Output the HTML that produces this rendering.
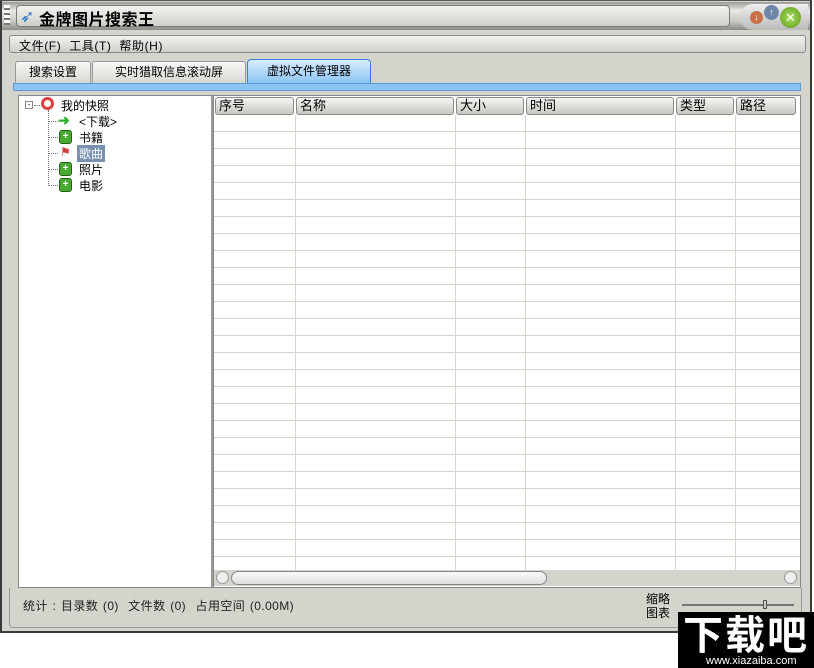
<!DOCTYPE html>
<html><head><meta charset="utf-8"><style>
*{margin:0;padding:0;box-sizing:border-box}
body{width:814px;height:668px;background:#fff;position:relative;overflow:hidden;font-family:"Liberation Sans","Noto Sans CJK SC","WenQuanYi Zen Hei",sans-serif;font-size:12px;color:#000}
.a{position:absolute}
.win{left:0;top:0;width:812px;height:633px;background:#d4d3cc;border:2px solid #3a3a3a;border-top:1px solid #555}
.hdr{top:97px;height:18px;background:linear-gradient(#f4f4f2,#c8c8c2);border:1px solid #8a8a86;border-radius:3px;padding-left:3px;line-height:15px;font-size:13px}
</style></head><body>
<div class="a win"></div>
<div class="a" style="left:2px;top:2px;width:808px;height:28px;background:linear-gradient(#9a9a96,#e8e8e4 30%,#c8c8c2 70%,#8a8a86)"></div>
<div class="a" style="left:16px;top:5px;width:714px;height:22px;background:linear-gradient(#f2f2f0,#cfcfca);border:1px solid #7a7a76;border-radius:4px"></div>
<div class="a" style="left:4px;top:5px;width:6px;height:20px;background:repeating-linear-gradient(#fff 0 3px,#777 3px 5px)"></div>
<div class="a" style="left:20px;top:7px;font-size:17px;color:#2a70c8">➶</div>
<div class="a" style="left:39px;top:6px;font-size:16px;font-weight:bold;letter-spacing:0.5px">金牌图片搜索王</div>
<div class="a" style="left:740px;top:4px;width:68px;height:26px;border-radius:14px 0 0 14px;background:linear-gradient(#eee,#bbb)"></div>
<div class="a" style="left:750px;top:11px;width:13px;height:13px;border-radius:50%;background:#c8704a;color:#fff;font-size:9px;text-align:center;line-height:13px">↓</div>
<div class="a" style="left:764px;top:5px;width:15px;height:15px;border-radius:50%;background:#6e86a8;color:#fff;font-size:9px;text-align:center;line-height:15px">↑</div>
<div class="a" style="left:780px;top:7px;width:21px;height:21px;border-radius:50%;background:radial-gradient(#a8e060,#5c9a18);color:#fff;font-size:13px;text-align:center;line-height:21px">✕</div>
<div class="a" style="left:9px;top:35px;width:797px;height:18px;background:linear-gradient(#f2f2f0,#cfcfca);border:1px solid #8a8a86;border-radius:3px"></div>
<div class="a" style="left:19px;top:37px;font-size:12px;letter-spacing:0.6px">文件(F)&nbsp;&nbsp;工具(T)&nbsp;&nbsp;帮助(H)</div>
<div class="a" style="left:15px;top:61px;width:76px;height:22px;background:linear-gradient(#f8f8f6,#d8d8d2);border:1px solid #999;border-bottom:none;border-radius:3px 3px 0 0;text-align:center;line-height:20px">搜索设置</div>
<div class="a" style="left:92px;top:61px;width:154px;height:22px;background:linear-gradient(#f8f8f6,#d8d8d2);border:1px solid #999;border-bottom:none;border-radius:3px 3px 0 0;text-align:center;line-height:20px">实时猎取信息滚动屏</div>
<div class="a" style="left:247px;top:59px;width:124px;height:24px;background:linear-gradient(#d8ecff,#8cc4f4);border:1px solid #3a80d8;border-bottom:none;border-radius:4px 4px 0 0;text-align:center;line-height:22px">虚拟文件管理器</div>
<div class="a" style="left:13px;top:83px;width:788px;height:8px;background:#8cc4f4;border:1px solid #5a9ad8"></div>
<div class="a" style="left:18px;top:95px;width:195px;height:493px;background:#fff;border:1px solid #888;border-right:2px solid #999"></div>
<div class="a" style="left:25px;top:101px;width:8px;height:8px;border:1px solid #888;font-size:8px;line-height:5px;text-align:center">-</div>
<div class="a" style="left:34px;top:105px;width:6px;border-top:1px dotted #777"></div>
<div class="a" style="left:48px;top:110px;height:76px;border-left:1px dotted #777"></div>
<div class="a" style="left:41px;top:97px;width:13px;height:13px;border-radius:50%;border:3px solid #e04040;background:#fff"></div>
<div class="a" style="left:61px;top:97px;font-size:12px">我的快照</div>
<div class="a" style="left:48px;top:121px;width:10px;border-top:1px dotted #777"></div>
<div class="a" style="left:58px;top:112px;color:#30b030;font-size:14px;font-weight:bold">➜</div>
<div class="a" style="left:79px;top:113px">&lt;下载&gt;</div>
<div class="a" style="left:48px;top:137px;width:10px;border-top:1px dotted #777"></div>
<div class="a" style="left:59px;top:130px;width:13px;height:14px;border-radius:3px;background:#48a830;border:1px solid #276018;color:#fff;font-size:10px;text-align:center;line-height:12px;font-weight:bold">+</div>
<div class="a" style="left:79px;top:129px">书籍</div>
<div class="a" style="left:48px;top:153px;width:10px;border-top:1px dotted #777"></div>
<div class="a" style="left:60px;top:145px;color:#d04040;font-size:12px">⚑</div>
<div class="a" style="left:77px;top:145px;background:#7890b0;color:#fff;padding:0 2px">歌曲</div>
<div class="a" style="left:48px;top:169px;width:10px;border-top:1px dotted #777"></div>
<div class="a" style="left:59px;top:162px;width:13px;height:14px;border-radius:3px;background:#48a830;border:1px solid #276018;color:#fff;font-size:10px;text-align:center;line-height:12px;font-weight:bold">+</div>
<div class="a" style="left:79px;top:161px">照片</div>
<div class="a" style="left:48px;top:185px;width:10px;border-top:1px dotted #777"></div>
<div class="a" style="left:59px;top:178px;width:13px;height:14px;border-radius:3px;background:#48a830;border:1px solid #276018;color:#fff;font-size:10px;text-align:center;line-height:12px;font-weight:bold">+</div>
<div class="a" style="left:79px;top:177px">电影</div>
<div class="a" style="left:213px;top:95px;width:588px;height:493px;background:#fff;border:1px solid #888"></div>
<div class="a" style="left:214px;top:115px;width:586px;height:455px;background:repeating-linear-gradient(#fff 0 16px,#d4d3cc 16px 17px)"></div>
<div class="a" style="left:295px;top:115px;width:1px;height:455px;background:#d4d3cc"></div>
<div class="a" style="left:455px;top:115px;width:1px;height:455px;background:#d4d3cc"></div>
<div class="a" style="left:525px;top:115px;width:1px;height:455px;background:#d4d3cc"></div>
<div class="a" style="left:675px;top:115px;width:1px;height:455px;background:#d4d3cc"></div>
<div class="a" style="left:735px;top:115px;width:1px;height:455px;background:#d4d3cc"></div>
<div class="a hdr" style="left:215px;width:79px">序号</div>
<div class="a hdr" style="left:296px;width:158px">名称</div>
<div class="a hdr" style="left:456px;width:68px">大小</div>
<div class="a hdr" style="left:526px;width:148px">时间</div>
<div class="a hdr" style="left:676px;width:58px">类型</div>
<div class="a hdr" style="left:736px;width:60px">路径</div>
<div class="a" style="left:214px;top:570px;width:586px;height:16px;background:#d4d3cc"></div>
<div class="a" style="left:216px;top:571px;width:13px;height:13px;border-radius:50%;border:1px solid #999;background:#eee"></div>
<div class="a" style="left:231px;top:571px;width:316px;height:14px;border-radius:7px;border:1px solid #888;background:linear-gradient(#fafafa,#ddd)"></div>
<div class="a" style="left:784px;top:571px;width:13px;height:13px;border-radius:50%;border:1px solid #999;background:#eee"></div>
<div class="a" style="left:9px;top:588px;width:793px;height:40px;border:1px solid #999;border-top:none;border-radius:0 0 4px 4px"></div>
<div class="a" style="left:23px;top:597px;font-size:12px;color:#222;letter-spacing:0.4px;word-spacing:1px">统计 : 目录数 (0)&nbsp;&nbsp;文件数 (0)&nbsp;&nbsp;占用空间 (0.00M)</div>
<div class="a" style="left:646px;top:592px;font-size:12px;line-height:14px">缩略<br>图表</div>
<div class="a" style="left:682px;top:604px;width:112px;height:2px;background:#777"></div>
<div class="a" style="left:763px;top:600px;width:4px;height:9px;background:#ccc;border:1px solid #555"></div>
<div class="a" style="left:678px;top:612px;width:136px;height:56px;background:#000"></div>
<div class="a" style="left:680px;top:606px;width:132px;color:#fff;font-size:40px;font-weight:bold;letter-spacing:2px;text-align:center;font-family:'Noto Sans CJK SC',sans-serif;line-height:52px">下载吧</div>
<div class="a" style="left:706px;top:655px;color:#fff;font-size:11px;line-height:12px">www.xiazaiba.com</div>
</body></html>
